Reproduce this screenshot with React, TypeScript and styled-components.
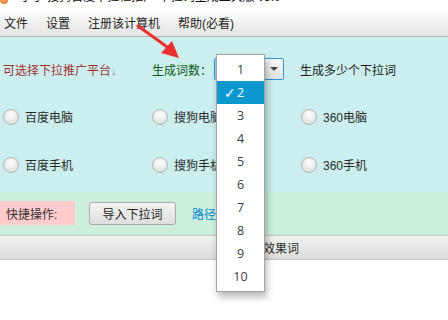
import React from "react";
import styled, { createGlobalStyle } from "styled-components";

const Global = createGlobalStyle`
  html, body { margin: 0; padding: 0; background: #fff; }
  body { width: 448px; height: 320px; overflow: hidden; }
  * { box-sizing: border-box; }
`;

const CJK = `"Liberation Sans", "Noto Sans CJK SC", sans-serif`;

const Window = styled.div`
  position: relative;
  width: 448px;
  height: 320px;
  overflow: hidden;
  font-family: ${CJK};
  font-size: 12px;
  color: #2a2a2a;
  display: flex;
  flex-direction: column;
`;

const TitleBar = styled.div`
  height: 10px;
  overflow: hidden;
  display: flex;
  align-items: flex-start;
  gap: 12px;
`;

const TitleIcon = styled.div`
  width: 8px;
  height: 8px;
  margin-top: -4px;
  border-radius: 50%;
  background: radial-gradient(circle at 40% 40%, #f7b26a, #d9731d);
`;

const TitleText = styled.div`
  margin-top: -10px;
  line-height: 14px;
  font-size: 12px;
  color: #111;
  white-space: nowrap;
`;

const MenuBar = styled.div`
  height: 27px;
  display: flex;
  align-items: center;
  gap: 18px;
  padding-left: 4px;
  padding-bottom: 1px;
  background: linear-gradient(#fdfdfd, #e4e4e4);
  border-bottom: 1px solid #b4b4b4;
`;

const MenuItem = styled.span`
  font-size: 12px;
  color: #222;
`;

const CyanPanel = styled.div`
  background: #cbeeee;
  height: 155px;
  padding: 21px 0 0 3px;
  display: flex;
  flex-direction: column;
`;

const Row = styled.div<{ $top: number; $h: number }>`
  display: grid;
  grid-template-columns: 149px 149px 1fr;
  align-items: center;
  height: ${(p) => p.$h}px;
  margin-top: ${(p) => p.$top}px;
`;

const RedLabel = styled.span`
  color: #a33232;
  white-space: nowrap;
`;

const Arrow = styled.span`
  color: #a070b0;
  font-size: 11px;
`;

const ComboGroup = styled.div`
  grid-column: 2 / span 2;
  display: flex;
  align-items: center;
`;

const GreenLabel = styled.span`
  color: #0a5a14;
  width: 62px;
  white-space: nowrap;
`;

const Combo = styled.div`
  width: 70px;
  height: 22px;
  border: 1px solid #2c95d6;
  border-radius: 2px;
  box-shadow: inset 0 0 0 1px #a9d6f2;
  background: #fff;
  display: flex;
  overflow: hidden;
`;

const ComboValue = styled.div`
  flex: 1;
  display: flex;
  align-items: center;
  justify-content: center;
  font-size: 12px;
`;

const ComboButton = styled.div`
  width: 20px;
  border-left: 1px solid #cfd8de;
  background: linear-gradient(#f7f7f7, #e2e2e2);
  display: flex;
  align-items: center;
  justify-content: center;
`;

const Tri = styled.div`
  width: 0;
  height: 0;
  border-left: 4px solid transparent;
  border-right: 4px solid transparent;
  border-top: 4px solid #444;
`;

const PlainText = styled.span`
  margin-left: 16px;
  color: #1a1a1a;
  white-space: nowrap;
`;

const RadioItem = styled.label`
  display: flex;
  align-items: center;
  gap: 6px;
  color: #2a2a2a;
  white-space: nowrap;
`;

const RadioCircle = styled.span`
  width: 16px;
  height: 16px;
  border-radius: 50%;
  border: 1px solid #b3b3b3;
  background: radial-gradient(circle at 50% 35%, #ffffff, #e6e6e6 60%, #d6d6d6);
`;

const GreenPanel = styled.div`
  background: #cdeedb;
  height: 44px;
  display: flex;
  align-items: center;
  border-bottom: 1px solid #c4c4c4;
`;

const PinkLabel = styled.div`
  width: 75px;
  height: 24px;
  margin-top: -1px;
  background: #ffcbcb;
  display: flex;
  align-items: center;
  padding-left: 6px;
  color: #333;
  font-size: 12px;
`;

const Button = styled.button`
  margin-left: 14px;
  width: 87px;
  height: 23px;
  border: 1px solid #a9a9a9;
  border-radius: 3px;
  background: linear-gradient(#f4f4f4, #dedede);
  font-family: ${CJK};
  font-size: 12px;
  color: #222;
  padding: 0;
`;

const Link = styled.span`
  margin-left: 16px;
  color: #0a86d0;
`;

const HeaderBar = styled.div`
  height: 24px;
  background: linear-gradient(#f1f1f1, #dcdcdc);
  border-bottom: 1px solid #c2c2c2;
  display: flex;
  align-items: center;
  padding-left: 239px;
  color: #2a2a2a;
`;

const WhiteArea = styled.div`
  flex: 1;
  background: #fff;
`;

const Popup = styled.div`
  position: absolute;
  left: 216px;
  top: 54px;
  width: 49px;
  padding: 3px 0;
  background: #fff;
  border: 1px solid #a3a3a3;
  box-shadow: 2px 5px 7px rgba(0, 0, 0, 0.28);
  display: flex;
  flex-direction: column;
`;

const PopItem = styled.div<{ $sel?: boolean }>`
  position: relative;
  height: 23px;
  display: flex;
  align-items: center;
  justify-content: center;
  font-family: "Open Sans", sans-serif;
  font-size: 12.5px;
  color: ${(p) => (p.$sel ? "#fff" : "#3a3a4a")};
  background: ${(p) => (p.$sel ? "#0b97cf" : "transparent")};
`;

const Check = styled.span`
  position: absolute;
  left: 7px;
  font-size: 14px;
  font-weight: bold;
  font-family: "DejaVu Sans", sans-serif;
`;

const ArrowSvg = styled.svg`
  position: absolute;
  left: 130px;
  top: 20px;
`;

const nums = [1, 2, 3, 4, 5, 6, 7, 8, 9, 10];

export default function App() {
  return (
    <>
      <Global />
      <Window>
        <TitleBar>
          <TitleIcon />
          <TitleText>小小 搜狗百度下拉框推广 下拉词生成工具版 v5.0</TitleText>
        </TitleBar>
        <MenuBar>
          <MenuItem>文件</MenuItem>
          <MenuItem>设置</MenuItem>
          <MenuItem>注册该计算机</MenuItem>
          <MenuItem>帮助(必看)</MenuItem>
        </MenuBar>
        <CyanPanel>
          <Row $top={0} $h={22}>
            <RedLabel>
              可选择下拉推广平台<Arrow>↓</Arrow>
            </RedLabel>
            <ComboGroup>
              <GreenLabel>生成词数：</GreenLabel>
              <Combo>
                <ComboValue>1</ComboValue>
                <ComboButton>
                  <Tri />
                </ComboButton>
              </Combo>
              <PlainText>生成多少个下拉词</PlainText>
            </ComboGroup>
          </Row>
          <Row $top={28} $h={16}>
            <RadioItem>
              <RadioCircle />
              百度电脑
            </RadioItem>
            <RadioItem>
              <RadioCircle />
              搜狗电脑
            </RadioItem>
            <RadioItem>
              <RadioCircle />
              360电脑
            </RadioItem>
          </Row>
          <Row $top={32} $h={16}>
            <RadioItem>
              <RadioCircle />
              百度手机
            </RadioItem>
            <RadioItem>
              <RadioCircle />
              搜狗手机
            </RadioItem>
            <RadioItem>
              <RadioCircle />
              360手机
            </RadioItem>
          </Row>
        </CyanPanel>
        <GreenPanel>
          <PinkLabel>快捷操作:</PinkLabel>
          <Button>导入下拉词</Button>
          <Link>路径</Link>
        </GreenPanel>
        <HeaderBar>下拉效果词</HeaderBar>
        <WhiteArea />
        <Popup>
          {nums.map((n) => (
            <PopItem key={n} $sel={n === 2}>
              {n === 2 && <Check>✓</Check>}
              {n}
            </PopItem>
          ))}
        </Popup>
        <ArrowSvg width="60" height="45" viewBox="0 0 60 45">
          <line x1="8" y1="6" x2="40" y2="29" stroke="#ee3030" strokeWidth="3" strokeLinecap="round" />
          <polygon points="49,38 31,33 42,21" fill="#ee3030" />
        </ArrowSvg>
      </Window>
    </>
  );
}
